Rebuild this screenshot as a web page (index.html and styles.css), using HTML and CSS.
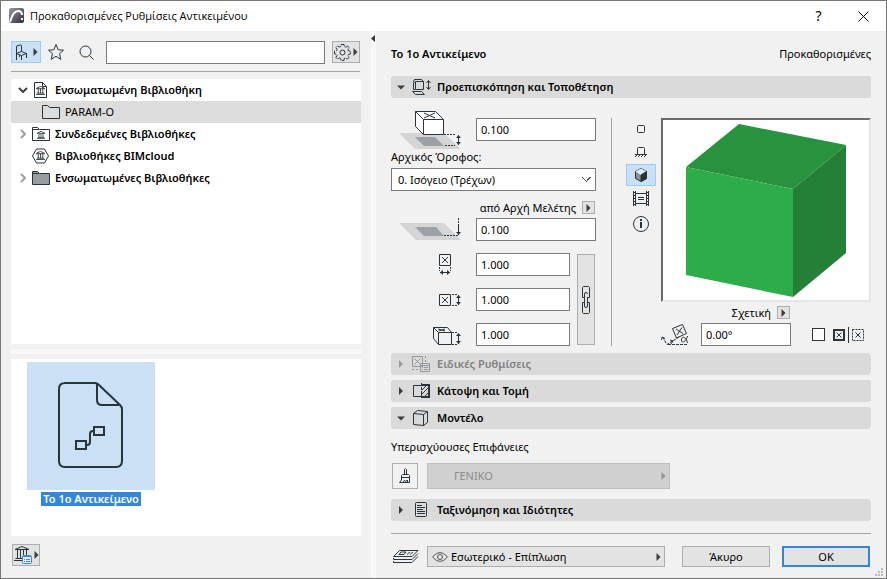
FILE: index.html
```
<!DOCTYPE html>
<html lang="el">
<head>
    <meta charset="UTF-8">
    <meta name="viewport" content="width=device-width, initial-scale=1.0">
    <title>Προκαθορισμένες Ρυθμίσεις Αντικειμένου</title>
    <link rel="stylesheet" href="styles.css">
</head>
<body>
    <!-- shared icons -->
    <svg class="defs" width="0" height="0">
        <symbol id="bank" viewBox="0 0 10 10">
            <path d="M0.5 2.5 L5 0.5 L9.5 2.5 M0 3 H10 M2.5 3 V8 M5 3 V8 M7.5 3 V8 M1 8 H9 M0 9.5 H10"/>
        </symbol>
        <symbol id="next" viewBox="0 0 5 8">
            <path d="M0.5 0 L4.5 4 L0.5 8 Z" fill="#3c3c3c" stroke="none"/>
        </symbol>
        <symbol id="down" viewBox="0 0 8 5">
            <path d="M0 0.5 H8 L4 4.5 Z" fill="#3c3c3c" stroke="none"/>
        </symbol>
        <symbol id="chevron" viewBox="0 0 6 10">
            <path d="M1 1 L5 5 L1 9" fill="none" stroke="#a0a0a0" stroke-width="2"/>
        </symbol>
    </svg>

    <header class="titlebar">
        <svg width="16" height="16" viewBox="0 0 16 16">
            <defs>
                <linearGradient id="logo" x1="0" y1="0" x2="1" y2="1">
                    <stop offset="0" stop-color="#9a9aa0"/>
                    <stop offset="1" stop-color="#2e2e38"/>
                </linearGradient>
            </defs>
            <rect x="0" y="0" width="15" height="15" rx="2" fill="url(#logo)" stroke="none"/>
            <path d="M1 14 C3 7 6 3 9 3 C12 3 13 5 13 7" stroke="#fff" stroke-width="2"/>
            <path d="M13 10 V12" stroke="#fff" stroke-width="2"/>
        </svg>
        <h1>Προκαθορισμένες Ρυθμίσεις Αντικειμένου</h1>
        <button class="window-button" aria-label="Βοήθεια">?</button>
        <button class="window-button" aria-label="Κλείσιμο">
            <svg width="11" height="11" viewBox="0 0 11 11"><path d="M0.5 0.5 L10.5 10.5 M10.5 0.5 L0.5 10.5" stroke="#000"/></svg>
        </button>
    </header>

    <main>
        <section class="library">
            <div class="toolbar">
                <button class="tool active" aria-label="Αντικείμενα">
                    <svg width="13" height="17" viewBox="0 0 13 17"><path d="M1.5 16 V3 Q1.5 1.5 3 1.5 L5.5 1 Q6.5 1 6.5 2 V7.5 M1.5 9.5 L6.5 7.5 L11.5 9.5 L6.5 11.500 Z M6.5 11.500 V16 M11.5 9.5 V14 M4.5 11 V13"/></svg>
                    <svg width="5" height="8"><use href="#next"/></svg>
                </button>
                <button class="tool plain" aria-label="Αγαπημένα">
                    <svg width="16" height="16" viewBox="0 0 16 16"><path d="M8 0.5 L10.200 5.800 L15.500 6.200 L11.500 9.700 L12.800 15.300 L8 12.300 L3.200 15.300 L4.500 9.700 L0.500 6.200 L5.800 5.800 Z"/></svg>
                </button>
                <button class="tool plain" aria-label="Αναζήτηση">
                    <svg width="15" height="15" viewBox="0 0 15 15"><circle cx="6.500" cy="6.500" r="5.500"/><path d="M10.500 10.500 L14.500 14.500"/></svg>
                </button>
                <input type="text" class="search" aria-label="Αναζήτηση">
                <button class="tool raised" aria-label="Ρυθμίσεις">
                    <svg width="17" height="17" viewBox="0 0 17 17"><path d="M7 0.500 H10 L10.500 2.700 L11.700 3.200 L13.600 2 L15.300 3.900 L14 5.600 L14.500 6.900 L16.500 7.300 V9.900 L14.500 10.300 L13.900 11.500 L15.100 13.300 L13.300 15.100 L11.500 13.900 L10.300 14.400 L9.900 16.500 H7.100 L6.700 14.400 L5.500 13.900 L3.700 15.100 L1.900 13.300 L3.100 11.500 L2.600 10.300 L0.500 9.900 V7.100 L2.600 6.700 L3.100 5.500 L1.900 3.700 L3.700 1.900 L5.500 3.100 L6.600 2.600 Z" stroke-dasharray="5 1"/><circle cx="8.500" cy="8.500" r="2.500"/></svg>
                    <svg width="5" height="8"><use href="#next"/></svg>
                </button>
            </div>

            <ul class="tree">
                <li>
                    <span class="toggle"><svg width="10" height="6" viewBox="0 0 10 6"><path d="M1 1 L5 5 L9 1" stroke="#404040" stroke-width="2"/></svg></span>
                    <svg class="node" width="18" height="16" viewBox="0 0 18 16"><path d="M2.500 0.500 H10.500 L14.500 4.500 V15.500 H2.500 Z M10.500 0.500 V4.500 H14.500"/><use href="#bank" x="4" y="4" width="9" height="9"/></svg>
                    Ενσωματωμένη Βιβλιοθήκη
                </li>
                <li class="child selected">
                    <svg class="node" width="18" height="16" viewBox="0 0 18 16"><path d="M0.500 14.500 V1.500 H5.500 L7.500 3.500 H17.500 V14.500 Z"/></svg>
                    PARAM-O
                </li>
                <li>
                    <span class="toggle"><svg width="6" height="10"><use href="#chevron"/></svg></span>
                    <svg class="node" width="18" height="16" viewBox="0 0 18 16"><path d="M0.500 14.500 V1.500 H5.500 L7.500 3.500 H17.500 V14.500 Z M0.500 3.500 H7"/><use href="#bank" x="4" y="5" width="10" height="8"/></svg>
                    Συνδεδεμένες Βιβλιοθήκες
                </li>
                <li>
                    <span class="toggle"></span>
                    <svg class="node" width="18" height="16" viewBox="0 0 18 16"><path d="M4.500 1 H12.500 L16.500 8 L12.500 15 H4.500 L0.500 8 Z"/><use href="#bank" x="4" y="3" width="9" height="9"/></svg>
                    Βιβλιοθήκες BIMcloud
                </li>
                <li>
                    <span class="toggle"><svg width="6" height="10"><use href="#chevron"/></svg></span>
                    <svg class="node" width="18" height="16" viewBox="0 0 18 16"><path d="M0.500 14.500 V1.500 H5.500 L7.500 3.500 H17.500 V14.500 Z M0.500 3.500 H7" fill="#989da0"/></svg>
                    Ενσωματωμένες Βιβλιοθήκες
                </li>
            </ul>

            <div class="splitter"></div>

            <div class="items">
                <figure>
                    <svg width="128" height="128" viewBox="0 0 128 128">
                        <g stroke-width="2">
                            <path d="M37 21 H68 Q70 21 72 23 L93 43 Q95 45 95 47 V99 Q95 105 89 105 H38 Q32 105 32 99 V27 Q32 21 38 21 Z"/>
                            <path d="M70 21 V38 Q70 43 75 43 H92"/>
                            <rect x="49" y="79" width="10" height="8"/>
                            <rect x="67" y="65" width="10" height="8"/>
                            <path d="M60 83 Q63 83 63 80 V72 Q63 69 66 69"/>
                        </g>
                    </svg>
                    <figcaption>Το 1ο Αντικείμενο</figcaption>
                </figure>
            </div>

            <div class="library-footer">
                <button class="tool raised" aria-label="Βιβλιοθήκη">
                    <svg width="18" height="18" viewBox="0 0 18 18"><path d="M1 3.500 L8 0.500 L15 3.500 M1 3.500 H15 M3.500 4 V12 M6.500 4 V12 M9.500 4 V9 M12.500 4 V9 M1.500 12.500 H8 M0 14.500 H8"/><rect x="8.500" y="9.500" width="9" height="8" rx="1" fill="#e8f1ff" stroke="#3a84ff"/><path d="M9 10.500 H17 M10 13.500 H11 M12 13.500 H16 M10 15.500 H11 M12 15.500 H16" stroke="#3a84ff"/></svg>
                    <svg width="5" height="8"><use href="#next"/></svg>
                </button>
            </div>
        </section>

        <div class="divider">
            <svg width="4" height="7" viewBox="0 0 4 7"><path d="M4 0 V7 L0 3.500 Z" fill="#333" stroke="none"/></svg>
        </div>

        <section class="settings">
            <div class="heading">
                <h2>Το 1ο Αντικείμενο</h2>
                <span>Προκαθορισμένες</span>
            </div>

            <button class="bar">
                <svg class="arrow" width="8" height="5"><use href="#down"/></svg>
                <svg class="bar-icon" width="18" height="16" viewBox="0 0 18 16"><path d="M1.500 3.500 V10.500 H3 M1.500 2.500 L2.500 0.500 H9.500 L11.500 2.500 M3.500 2.500 H11.500 V10.500 H3.500 Z M1.500 2.500 L3.500 4 M0.500 12.500 H9.500 L12.500 15.500 H3.500 Z M16.500 2 V10 M14.500 4 L16.500 1.500 L18.500 4 M14.500 8 L16.500 10.500 L18.500 8"/></svg>
                Προεπισκόπηση και Τοποθέτηση
            </button>

            <div class="placement">
                <div class="dimensions">
                    <div class="field first">
                        <svg width="62" height="39" viewBox="0 0 62 39">
                            <path d="M0 23 H45 L62 39 H16 Z" fill="#d5d5d5" stroke="none"/>
                            <path d="M16 27 H36 L45 36 H25 Z" fill="#9ba1a4" stroke="none"/>
                            <path d="M16.500 1.500 H36.500 L44.500 9.500 V24.500 H24.500 L16.500 16.500 Z" fill="#fff"/>
                            <path d="M16.500 1.500 L24.500 9.500 H44.500 M24.500 9.500 V24.500 M25 3 L36 8 M36 3 L25 8"/>
                            <path d="M45 24.500 H56 M46 35.500 H56" stroke-dasharray="2 1"/>
                            <path d="M59.500 25 V35"/>
                            <path d="M57 28 L59.500 25 L62 28 Z M57 32 L59.500 35 L62 32 Z" fill="#29343d" stroke="none"/>
                        </svg>
                        <input type="text" value="0.100" aria-label="Ύψος από όροφο">
                    </div>
                    <label class="caption" for="story">Αρχικός Όροφος:</label>
                    <select id="story">
                        <option>0. Ισόγειο (Τρέχων)</option>
                    </select>
                    <div class="reference">
                        <label for="origin">από Αρχή Μελέτης</label>
                        <button class="mini" aria-label="Επιλογή αναφοράς"><svg width="5" height="8"><use href="#next"/></svg></button>
                    </div>
                    <div class="field">
                        <svg width="62" height="23" viewBox="0 0 62 23">
                            <path d="M0 5 H45 L62 22 H17 Z" fill="#d5d5d5" stroke="none"/>
                            <path d="M16 9 H37 L45 18 H25 Z" fill="#9ba1a4" stroke="none"/>
                            <path d="M45 17.500 H59 M59.500 0 V8" stroke-dasharray="2 1"/>
                            <path d="M59.500 7 V17"/>
                            <path d="M57 14 L59.500 17 L62 14 Z" fill="#29343d" stroke="none"/>
                        </svg>
                        <input type="text" id="origin" value="0.100">
                    </div>
                    <div class="sizes">
                        <div class="size-fields">
                            <div class="field">
                                <svg width="28" height="22" viewBox="0 0 28 22"><path d="M6.500 0.500 H17.500 V11.500 H6.500 Z M9 3 L15 9 M15 3 L9 9 M7 18.500 H17"/><path d="M10 16 L7 18.500 L10 21 Z M14 16 L17 18.500 L14 21 Z" fill="#29343d" stroke="none"/><path d="M6.500 13 V17 M17.500 13 V17" stroke-dasharray="2 1"/></svg>
                                <input type="text" value="1.000" aria-label="Μήκος">
                            </div>
                            <div class="field">
                                <svg width="28" height="22" viewBox="0 0 28 22"><path d="M6.500 5.500 H17.500 V16.500 H6.500 Z M9 8 L15 14 M15 8 L9 14 M25.500 6 V16"/><path d="M23 9 L25.500 6 L28 9 Z M23 13 L25.500 16 L28 13 Z" fill="#29343d" stroke="none"/><path d="M19 5.500 H25 M19 16.500 H25" stroke-dasharray="2 1"/></svg>
                                <input type="text" value="1.000" aria-label="Πλάτος">
                            </div>
                            <div class="field">
                                <svg width="28" height="22" viewBox="0 0 28 22"><path d="M0.500 3.500 H14.500 L18.500 8.500 V20.500 H5.500 L0.500 14.500 Z M0.500 3.500 L5.500 8.500 V20.500 M5.500 8.500 H18.500 M5 5 L12 7 M12 5 L6 7 M25.500 10 V20"/><path d="M23 12 L25.500 9 L28 12 Z M23 17 L25.500 20 L28 17 Z" fill="#29343d" stroke="none"/><path d="M19 8.500 H25 M19 20.500 H25" stroke-dasharray="2 1"/></svg>
                                <input type="text" value="1.000" aria-label="Ύψος">
                            </div>
                        </div>
                        <button class="link" aria-label="Διατήρηση αναλογιών">
                            <svg width="8" height="28" viewBox="0 0 8 28"><path d="M2.500 11.500 H0.500 V1.500 L1.500 0.500 H6.500 L7.500 1.500 V11.500 H5.500 M2.500 16.500 H0.500 V26.500 L1.500 27.500 H6.500 L7.500 26.500 V16.500 H5.500 M2.500 20.500 V8 Q2.500 6.500 4 6.500 Q5.500 6.500 5.500 8 M5.500 11 V20 Q5.500 21.500 4 21.500 Q2.500 21.500 2.500 20"/></svg>
                        </button>
                    </div>
                </div>

                <div class="views">
                    <button aria-label="Κάτοψη"><svg width="8" height="8" viewBox="0 0 8 8"><rect x="0.500" y="0.500" width="7" height="7" rx="1"/></svg></button>
                    <button aria-label="Όψη"><svg width="12" height="10" viewBox="0 0 12 10"><path d="M2.500 7 V1.500 Q2.500 0.500 3.500 0.500 H8.500 Q9.500 0.500 9.500 1.500 V7 M0 7.500 H12 M0 10 L2 8 M3 10 L5 8 M6 10 L8 8 M9 10 L11 8"/></svg></button>
                    <button class="active" aria-label="Τρισδιάστατη προβολή"><svg width="12" height="14" viewBox="0 0 12 14"><path d="M6 0.500 L11.500 3.500 V10.500 L6 13.500 L0.500 10.500 V3.500 Z" fill="#8b9299"/><path d="M6 0.500 L11.500 3.500 L6 7 L0.500 3.500 Z" fill="#dcecf8" stroke="none"/><path d="M6 7 L11.500 3.500 V10.500 L6 13.500 Z" fill="#29343d"/></svg></button>
                    <button aria-label="Εικόνα"><svg width="16" height="15" viewBox="0 0 16 15"><path d="M0.500 0 V15 M2.500 0 V15 M13.500 0 V15 M15.500 0 V15 M3 2.500 H13 M3 12.500 H13 M5 6.500 H11 M5 8.500 H11"/><path d="M1.500 1 V15 M14.500 1 V15" stroke-dasharray="1 2"/></svg></button>
                    <button class="info" aria-label="Πληροφορίες"><svg width="16" height="16" viewBox="0 0 16 16"><circle cx="8" cy="8" r="7.500"/><path d="M8 3 V5 M8 6 V12" stroke-width="2"/></svg></button>
                </div>

                <div class="preview">
                    <svg class="cube" viewBox="0 0 206 180">
                        <g stroke="none">
                            <path d="M76 4 L183 25 L130 69 L23 47 Z" fill="#29923e"/>
                            <path d="M23 47 L130 69 V177 L23 155 Z" fill="#2eac49"/>
                            <path d="M130 69 L183 25 V133 L130 177 Z" fill="#248036"/>
                        </g>
                    </svg>
                    <div class="relative">
                        <label for="angle">Σχετική</label>
                        <button class="mini" aria-label="Επιλογή γωνίας"><svg width="5" height="8"><use href="#next"/></svg></button>
                    </div>
                    <div class="rotation">
                        <svg width="29" height="23" viewBox="0 0 29 23"><path d="M11.500 5.500 L21.500 1.500 L25.500 10.500 L15.500 15 Z M15 6 L22 10.500 M21 4.500 L16 12"/><path d="M1.500 14 L6 21.500 L18 14 M7 21.500 H27" stroke-dasharray="3 1"/><path d="M0.500 17 L1 14 L4 15.500 M9 17 L12 18 L10 21"/><path d="M26.500 13 C25 19 20.500 21 20.500 17 C20.500 13 25 13 26.500 20"/></svg>
                        <input type="text" id="angle" value="0.00°">
                        <input type="checkbox" id="mirror" aria-label="Κατοπτρισμός">
                        <svg width="32" height="16" viewBox="0 0 32 16"><rect x="1" y="3" width="10" height="10" stroke-width="2"/><path d="M3.500 5.500 L8.500 10.500 M8.500 5.500 L3.500 10.500 M15.500 0 V16 M22.500 5.500 L27.500 10.500 M27.500 5.500 L22.500 10.500"/><rect x="19.500" y="2.500" width="11" height="11" stroke-dasharray="2 1"/></svg>
                    </div>
                </div>
            </div>

            <div class="bars">
                <button class="bar" disabled>
                    <svg class="arrow" width="5" height="8"><use href="#next"/></svg>
                    <svg class="bar-icon" width="18" height="16" viewBox="0 0 18 16"><path d="M0.500 0.500 H10.500 V10.500 H0.500 Z M2.500 2.500 L8.500 8.500 M8.500 2.500 L2.500 8.500 M8.500 7.500 H17.500 V15.500 H8.500 Z M9 9.500 H17 M10 11.500 H11 M12 11.500 H16 M10 13.500 H11 M12 13.500 H16"/><path d="M13.500 0 V6 M0 13.500 H7" stroke-dasharray="2 2"/></svg>
                    Ειδικές Ρυθμίσεις
                </button>
                <button class="bar">
                    <svg class="arrow" width="5" height="8"><use href="#next"/></svg>
                    <svg class="bar-icon" width="18" height="16" viewBox="0 0 18 16"><path d="M9 2.500 H1.500 V13.500 H9 M10 7 L15 2 M9 12 L17 4 M12 14 L17 9"/><path d="M9 2 H17 V14 H9" stroke-width="2"/><path d="M9.500 0 V16" stroke-dasharray="3 1"/></svg>
                    Κάτοψη και Τομή
                </button>
                <button class="bar">
                    <svg class="arrow" width="8" height="5"><use href="#down"/></svg>
                    <svg class="bar-icon" width="18" height="16" viewBox="0 0 18 16"><path d="M1.500 3.500 L5.500 0.500 L15.500 1.500 V12.500 L11.500 15.500 L1.500 14.500 Z M1.500 3.500 L11.500 4.500 L15.500 1.500 M11.500 4.500 V15.500"/></svg>
                    Μοντέλο
                </button>
            </div>

            <div class="model">
                <p>Υπερισχύουσες Επιφάνειες</p>
                <div class="surface">
                    <button class="brush" aria-label="Επιφάνεια"><svg width="12" height="16" viewBox="0 0 12 16"><path d="M5.500 6 V1.500 L6.500 0.500 L7.500 1.500 V6 M2.500 10.500 V7.500 L3.500 6.500 H9.500 L10.500 7.500 V14.500 H0.500 L2.500 12 V9.500 H10 M4.500 14 L5.500 12 M6.500 14 L7.500 12 M8.500 14 V12"/></svg></button>
                    <button class="material" disabled>
                        ΓΕΝΙΚΟ
                        <svg width="5" height="8"><use href="#next"/></svg>
                    </button>
                </div>
            </div>

            <button class="bar">
                <svg class="arrow" width="5" height="8"><use href="#next"/></svg>
                <svg class="bar-icon" width="18" height="16" viewBox="0 0 18 16"><rect x="3.500" y="0.500" width="11" height="14" rx="1"/><path d="M5 3.500 H10 M5 5.500 H13 M5 7.500 H11 M5 9.500 H13 M5 11.500 H13"/></svg>
                Ταξινόμηση και Ιδιότητες
            </button>

            <footer>
                <svg width="26" height="16" viewBox="0 0 26 16"><path d="M6.500 1.500 H25 L19 7.500 H0.500 Z M0.500 9 V10.500 H19 L25 4.500 M0.500 12 V13.500 H19 L25 7.500 M8 3 H13 L11 5.500 H6 Z M14 5.500 L17 3 M17 5.500 L20 3"/></svg>
                <button class="layer">
                    <svg width="16" height="10" viewBox="0 0 16 10"><path d="M0.500 5 Q8 -4 15.500 5 Q8 14 0.500 5 Z" stroke="#555"/><circle cx="8" cy="5" r="2.500" stroke="#555"/></svg>
                    Εσωτερικό - Επίπλωση
                    <svg class="end" width="5" height="8"><use href="#next"/></svg>
                </button>
                <button class="action">Άκυρο</button>
                <button class="action default">OK</button>
            </footer>
        </section>
    </main>
    <svg class="grip" width="8" height="8" viewBox="0 0 8 8"><path d="M6 0 H8 V2 H6 Z M3 3 H5 V5 H3 Z M6 3 H8 V5 H6 Z M0 6 H2 V8 H0 Z M3 6 H5 V8 H3 Z M6 6 H8 V8 H6 Z" fill="#bbb" stroke="none"/></svg>
</body>
</html>
```
FILE: styles.css
```
* {
    box-sizing: border-box;
}
body {
    margin: 0;
    min-height: 100vh;
    display: flex;
    flex-direction: column;
    position: relative;
    border: 1px solid #777;
    background-color: #f1f1f1;
    color: #000;
    font-family: 'Noto Sans', 'Open Sans', sans-serif;
    font-size: 11px;
    line-height: 16px;
}
svg {
    flex: none;
    fill: none;
    stroke: #29343d;
}
.defs {
    position: absolute;
}
button, input, select {
    margin: 0;
    font: inherit;
    color: inherit;
}
button {
    display: flex;
    align-items: center;
    justify-content: center;
    padding: 0;
    border: 1px solid #adadad;
    background-color: #e3e3e3;
}
input, select {
    height: 23px;
    padding: 0 4px;
    border: 1px solid #7a7a7a;
    border-radius: 0;
    background-color: #fff;
}
h1, h2, p, ul, figure {
    margin: 0;
    padding: 0;
}
.titlebar {
    display: flex;
    align-items: center;
    height: 30px;
    padding-left: 8px;
    background-color: #fff;
}
.titlebar h1 {
    flex: 1;
    margin-left: 5px;
    font-family: 'Open Sans', 'Noto Sans', sans-serif;
    font-size: 11px;
    font-weight: 400;
}
.window-button {
    width: 45px;
    height: 30px;
    border: 0;
    background: none;
    font-size: 14px;
}
main {
    flex: 1;
    display: flex;
}
.library {
    width: 370px;
    padding: 10px 10px 12px;
    display: flex;
    flex-direction: column;
}
.toolbar {
    display: flex;
    align-items: center;
    height: 31px;
    padding-bottom: 8px;
    margin: 0 1px 7px 0;
    border-bottom: 1px solid #a5a5a5;
}
.tool {
    gap: 5px;
    width: 30px;
    height: 22px;
}
.tool.active {
    border-color: #99ccff;
    background-color: #c9e0f5;
}
.tool.plain {
    border: 0;
    background: none;
}
.tool.raised {
    gap: 2px;
    width: 28px;
}
.search {
    flex: 1;
    margin: 0 7px 0 5px;
    min-width: 0;
}
.tree {
    flex: 1;
    list-style: none;
    background-color: #fff;
    font-weight: 600;
}
.tree li {
    display: flex;
    align-items: center;
    height: 22px;
    padding-left: 6px;
}
.tree .child {
    padding-left: 31px;
    font-weight: 400;
}
.tree .selected {
    background-color: #dcdcdc;
}
.toggle {
    display: flex;
    justify-content: center;
    width: 11px;
    margin-right: 4px;
}
.node {
    margin-right: 5px;
}
.splitter {
    height: 5px;
    margin: 5px 0;
    background-color: #f8f8f8;
}
.items {
    height: 177px;
    padding: 3px 16px;
    background-color: #fff;
}
.items figure {
    width: 128px;
    text-align: center;
}
.items figure svg {
    display: block;
    background-color: #c9e0f5;
}
figcaption {
    display: inline-block;
    margin-top: 2px;
    padding: 0 2px;
    background-color: #3385dd;
    color: #fff;
    font-weight: 600;
    line-height: 14px;
}
.library-footer {
    padding: 8px 1px 0;
}
.divider {
    width: 5px;
    padding-top: 4px;
    line-height: 0;
    background-color: #f8f8f8;
}
.settings {
    flex: 1;
    min-width: 0;
    padding: 12px 15px 11px 15px;
}
.heading {
    display: flex;
    align-items: center;
    justify-content: space-between;
    height: 22px;
    margin-bottom: 11px;
}
.heading h2 {
    font-size: 11px;
    font-weight: 600;
}
.bar {
    justify-content: flex-start;
    width: 100%;
    height: 22px;
    padding-left: 5px;
    border: 0;
    border-radius: 3px;
    background-color: #dadada;
    font-weight: 600;
}
.bar:disabled {
    color: #808080;
}
.bar:disabled svg {
    opacity: 0.4;
}
.arrow {
    width: 10px;
}
.bar-icon {
    margin: 0 7px 0 6px;
    overflow: visible;
}
.placement {
    display: flex;
    margin: 11px 0 7px;
}
.dimensions {
    width: 205px;
}
.field {
    display: flex;
    align-items: center;
    justify-content: flex-end;
}
.field svg {
    margin-right: 15px;
}
.field input {
    width: 120px;
}
.first {
    height: 40px;
}
.caption {
    display: block;
    height: 19px;
}
select {
    display: block;
    width: 100%;
    appearance: none;
    background-image: linear-gradient(45deg, transparent 45%, #555 45%, #555 60%, transparent 60%), linear-gradient(-45deg, transparent 45%, #555 45%, #555 60%, transparent 60%);
    background-position: right 8px center, right 4px center;
    background-size: 5px 5px;
    background-repeat: no-repeat;
    padding-left: 6px;
}
.reference, .relative {
    display: flex;
    align-items: center;
    justify-content: flex-end;
    gap: 6px;
}
.reference {
    height: 19px;
    margin-top: 8px;
    padding: 0 1px 2px 0;
}
.mini {
    width: 13px;
    height: 13px;
}
.sizes {
    display: flex;
    justify-content: space-between;
    margin-top: 12px;
}
.size-fields {
    display: flex;
    flex-direction: column;
    gap: 12px;
    width: 179px;
}
.sizes input {
    width: 94px;
}
.link {
    width: 18px;
    margin: 1px 1px 1px 0;
}
.views {
    display: flex;
    flex-direction: column;
    gap: 1px;
    margin: 9px 5px 0 15px;
    padding-left: 14px;
    border-left: 1px solid #a5a5a5;
}
.views button {
    width: 30px;
    height: 22px;
    border-color: transparent;
    background: none;
}
.views .active {
    border-color: #99ccff;
    background-color: #c9e0f5;
}
.views .info {
    height: 28px;
}
.preview {
    flex: 1;
    min-width: 0;
    margin-top: 9px;
}
.cube {
    display: block;
    width: 100%;
    height: 184px;
    border: 2px solid #6a6a6a;
    border-right-color: #e5e5e5;
    border-bottom-color: #e5e5e5;
    background-color: #fff;
}
.relative {
    width: 129px;
    height: 21px;
}
.rotation {
    display: flex;
    align-items: center;
}
.rotation input[type="text"] {
    width: 90px;
    margin-left: 11px;
}
input[type="checkbox"] {
    appearance: none;
    width: 13px;
    height: 13px;
    margin: 0 8px 0 21px;
    padding: 0;
    border-color: #333;
}
.bars {
    display: flex;
    flex-direction: column;
    gap: 5px;
}
.model {
    padding: 10px 0;
}
.surface {
    display: flex;
    gap: 9px;
    margin: 8px 0 0 1px;
}
.brush {
    width: 26px;
    height: 26px;
    background-color: #f1f1f1;
}
.material {
    justify-content: space-between;
    width: 243px;
    padding: 0 3px 0 26px;
    border-color: #bfbfbf;
    background-color: #d0d0d0;
    color: #8b8b8b;
}
.material svg {
    opacity: 0.4;
}
footer {
    display: flex;
    align-items: center;
    margin-top: 12px;
    padding: 12px 1px 0 2px;
    border-top: 1px solid #a5a5a5;
}
.layer {
    justify-content: flex-start;
    gap: 3px;
    width: 238px;
    height: 21px;
    margin: 0 auto 0 8px;
    padding: 0 3px 0 4px;
}
.end {
    margin-left: auto;
}
.action {
    width: 88px;
    height: 21px;
}
.default {
    margin-left: 12px;
    border: 2px solid #3385dd;
}
.grip {
    position: absolute;
    right: 3px;
    bottom: 2px;
}
```
